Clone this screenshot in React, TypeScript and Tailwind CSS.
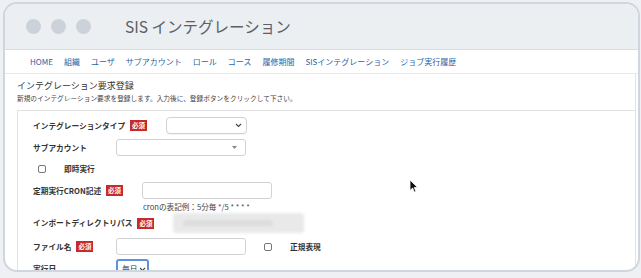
import React from "react";

const navItems = [
  "HOME",
  "組織",
  "ユーザ",
  "サブアカウント",
  "ロール",
  "コース",
  "履修期間",
  "SISインテグレーション",
  "ジョブ実行履歴",
];

function Badge() {
  return (
    <span className="inline-flex items-center justify-center w-[17px] h-[11px] bg-[#c72a2b] text-white text-[6.5px] font-bold leading-none">
      必須
    </span>
  );
}

function Label({ text, required }: { text: string; required?: boolean }) {
  return (
    <div className="flex items-center gap-[5px] min-w-[64px] mr-[19px]">
      <span className="text-[7.7px] font-bold text-[#333] leading-none whitespace-nowrap">{text}</span>
      {required && <Badge />}
    </div>
  );
}

function Chevron() {
  return (
    <svg width="7" height="5" viewBox="0 0 7 5" className="shrink-0">
      <path d="M1 1l2.5 2.5L6 1" fill="none" stroke="#444" strokeWidth="1.1" />
    </svg>
  );
}

function Checkbox() {
  return <span className="w-[8px] h-[8px] rounded-[2px] border border-[#777] bg-white shrink-0" />;
}

export default function App() {
  return (
    <div className="w-[641px] h-[278px] bg-[#eef0f3] pt-[2px] pl-[3px] pr-[1px] overflow-hidden font-['Noto_Sans_CJK_JP',sans-serif]">
      <div className="relative h-[270px] rounded-[14px] border-2 border-[#cfd6de] bg-white overflow-hidden flex flex-col">
        {/* title bar */}
        <div className="h-[46px] shrink-0 bg-[#eceff2] border-b border-[#d7dde3] flex items-center pl-[21px]">
          <div className="flex gap-[10px]">
            <span className="w-[15px] h-[15px] rounded-full bg-[#ccd2d9]" />
            <span className="w-[15px] h-[15px] rounded-full bg-[#ccd2d9]" />
            <span className="w-[15px] h-[15px] rounded-full bg-[#ccd2d9]" />
          </div>
          <span className="ml-[34px] text-[15.5px] text-[#5b6068] leading-none">SIS インテグレーション</span>
        </div>

        {/* nav */}
        <div className="h-[24px] shrink-0 border-b border-[#e8e8e8] flex items-center pl-[25px] gap-[11px]">
          {navItems.map((n) => (
            <span key={n} className="text-[8px] text-[#2a63a8] leading-none whitespace-nowrap">
              {n}
            </span>
          ))}
        </div>

        <div className="flex flex-1 min-h-0">
          <div className="flex-1 pl-[12px] flex flex-col">
            <div className="pt-[6px] text-[9px] text-[#333] leading-[12px]">インテグレーション要求登録</div>
            <div className="mt-[1px] text-[6.7px] text-[#444] leading-[10px]">
              新規のインテグレーション要求を登録します。入力後に、登録ボタンをクリックして下さい。
            </div>

            <div className="mt-[7px] flex-1 border-t border-l border-[#e2e2e2] pl-[15px] pt-[5px] flex flex-col">
              {/* row 1 */}
              <div className="h-[19px] flex items-center">
                <Label text="インテグレーションタイプ" required />
                <div className="w-[81px] h-[17px] rounded-[4px] border border-[#d2d2d2] bg-white shadow-[0_1px_1px_rgba(0,0,0,0.05)] flex items-center justify-end pr-[4px]">
                  <Chevron />
                </div>
              </div>
              {/* row 2 */}
              <div className="mt-[3px] h-[19px] flex items-center">
                <Label text="サブアカウント" />
                <div className="w-[130px] h-[17px] rounded-[3px] border border-[#d2d2d2] bg-white flex items-center justify-end pr-[8px]">
                  <svg width="5" height="3" viewBox="0 0 5 3">
                    <path d="M0 0h5L2.5 3z" fill="#888" />
                  </svg>
                </div>
              </div>
              {/* row 3 */}
              <div className="h-[24px] flex items-center pl-[5px] gap-[18px]">
                <Checkbox />
                <span className="text-[7.7px] font-bold text-[#333] leading-none">即時実行</span>
              </div>
              {/* row 4 */}
              <div className="h-[19px] flex items-center">
                <Label text="定期実行CRON記述" required />
                <div className="w-[130px] h-[17px] rounded-[3px] border border-[#d2d2d2] bg-white" />
              </div>
              {/* hint */}
              <div className="h-[13px] flex items-center pl-[110px] text-[7.6px] text-[#444] leading-none">
                cronの表記例：5分毎 */5 * * * *
              </div>
              {/* row 5 */}
              <div className="h-[20px] flex items-center">
                <Label text="インポートディレクトリパス" required />
                <div className="w-[131px] h-[20px] rounded-[3px] bg-[#e9e9e9] blur-[1.5px] flex items-center pl-[10px]">
                  <span className="w-[90px] h-[6px] bg-[#dcdcdc] rounded-full" />
                </div>
              </div>
              {/* row 6 */}
              <div className="mt-[3px] h-[21px] flex items-center">
                <Label text="ファイル名" required />
                <div className="w-[130px] h-[17px] rounded-[3px] border border-[#d2d2d2] bg-white" />
                <div className="ml-[18px] flex items-center gap-[18px]">
                  <Checkbox />
                  <span className="text-[7.7px] font-bold text-[#333] leading-none">正規表現</span>
                </div>
              </div>
              {/* row 7 */}
              <div className="mt-[2px] h-[20px] flex items-start">
                <div className="h-[20px] flex items-center">
                  <Label text="実行日" />
                </div>
                <div className="w-[33px] h-[20px] rounded-[3px] border-2 border-[#5b95e0] bg-white flex items-center gap-[2px] pl-[4px]">
                  <span className="text-[7.7px] text-[#333] leading-none">毎日</span>
                  <Chevron />
                </div>
              </div>
            </div>
          </div>
          <div className="w-[3px] shrink-0 border-l border-[#e2e2e2]" />
        </div>

        {/* mouse cursor */}
        <svg className="absolute left-[404px] top-[175px]" width="9" height="14" viewBox="0 0 9 14">
          <path d="M1 1v10.5l2.6-2.4 1.8 4 1.6-.7-1.8-3.9H8.6z" fill="#111" stroke="#fff" strokeWidth="0.8" />
        </svg>
      </div>
    </div>
  );
}
